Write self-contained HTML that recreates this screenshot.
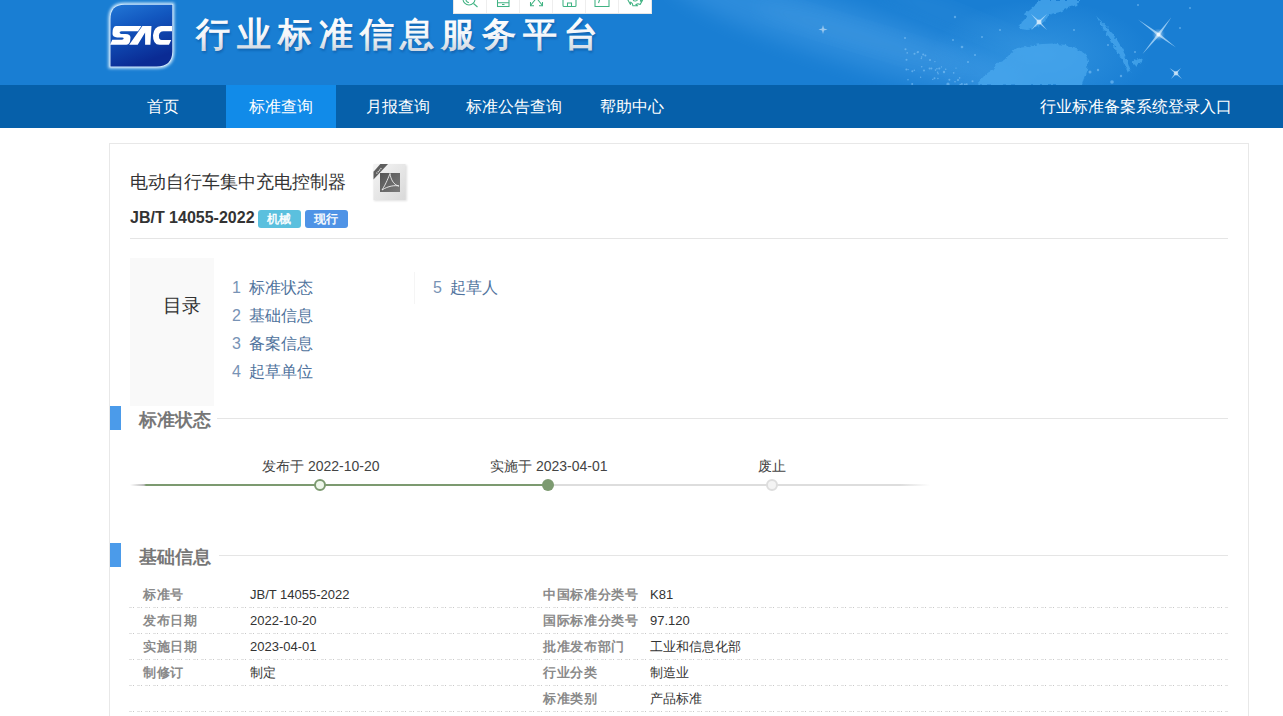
<!DOCTYPE html>
<html><head><meta charset="utf-8">
<style>
*{margin:0;padding:0;box-sizing:border-box}
html,body{width:1283px;height:716px;overflow:hidden;background:#fff;font-family:"Liberation Sans",sans-serif;color:#333}
.hdr{position:absolute;left:0;top:0;width:1283px;height:85px;background:#197ed3;overflow:hidden}
.nav{position:absolute;left:0;top:85px;width:1283px;height:43px;background:#0660aa}
.nav .it{position:absolute;top:0;height:43px;line-height:43px;color:#fff;font-size:16px;text-align:center}
.nav .act{background:#118be9}
.toolbar{position:absolute;left:453px;top:-1px;width:199px;height:15px;background:#fff;border:1px solid #e6e6e6;overflow:hidden}
.card{position:absolute;left:109px;top:143px;width:1140px;height:600px;border:1px solid #e8e8e8;background:#fff}
.abs{position:absolute;white-space:nowrap}
.title{font-size:18px;color:#333}
.code{font-size:16px;font-weight:bold;color:#333}
.tag{font-size:12px;font-weight:normal;-webkit-text-stroke:0.4px #fff;color:#fff;height:18px;line-height:18px;text-align:center;border-radius:3px}
.hr{position:absolute;height:1px;background:#e5e5e5}
.toc{position:absolute;left:130px;top:258px;width:84px;height:148px;background:#f9f9f9}
.tocit{font-size:16px;color:#50739d}
.tocit .n{color:#7893b5;margin-right:8px}
.sec{position:absolute;font-size:18px;font-weight:bold;color:#777}
.bar{position:absolute;left:110px;width:11px;height:24px;background:#4b9bea}
.lbl{font-size:13px;color:#8a8a8a;font-weight:bold;letter-spacing:0.7px}
.val{font-size:13px;color:#333}
.tl{font-size:14px;color:#444}
.dash{position:absolute;left:129px;width:1099px;height:1px;background:repeating-linear-gradient(to right,#e2e2e2 0,#e2e2e2 3px,#fff 3px,#fff 4px,#c8c8c8 4px,#c8c8c8 5px,#fff 5px,#fff 8px)}
</style></head><body>
<div class="hdr">
<svg width="1283" height="85" style="position:absolute;left:0;top:0">
<defs>
<linearGradient id="streak" x1="0" y1="0" x2="1" y2="0">
<stop offset="0" stop-color="#fff" stop-opacity="0"/>
<stop offset="0.55" stop-color="#fff" stop-opacity="0.12"/>
<stop offset="1" stop-color="#fff" stop-opacity="0"/>
</linearGradient>
<radialGradient id="glow" cx="0.5" cy="0.5" r="0.5">
<stop offset="0" stop-color="#5cb8f5" stop-opacity="0.35"/>
<stop offset="1" stop-color="#5cb8f5" stop-opacity="0"/>
</radialGradient>
<linearGradient id="logo" x1="0" y1="0" x2="0.35" y2="1">
<stop offset="0" stop-color="#2277d6"/>
<stop offset="0.4" stop-color="#1257bf"/>
<stop offset="1" stop-color="#0a2b94"/>
</linearGradient>
<linearGradient id="ttl" x1="0" y1="0" x2="0" y2="1">
<stop offset="0" stop-color="#ffffff"/>
<stop offset="0.55" stop-color="#f4f6f9"/>
<stop offset="1" stop-color="#c9d3de"/>
</linearGradient>
<filter id="blur2"><feGaussianBlur stdDeviation="2"/></filter>
<filter id="blur8" x="-50%" y="-50%" width="200%" height="200%"><feGaussianBlur stdDeviation="10"/></filter>
<filter id="blur3" x="-50%" y="-50%" width="200%" height="200%"><feGaussianBlur stdDeviation="3"/></filter>
<filter id="glowf" x="-50%" y="-50%" width="200%" height="200%"><feGaussianBlur stdDeviation="0.7"/></filter>
<filter id="blur15" x="-20%" y="-20%" width="140%" height="140%"><feGaussianBlur stdDeviation="1.5"/></filter>
<filter id="rough" x="-10%" y="-10%" width="120%" height="120%"><feTurbulence type="fractalNoise" baseFrequency="0.25" numOctaves="2" seed="4" result="n"/><feDisplacementMap in="SourceGraphic" in2="n" scale="5" xChannelSelector="R" yChannelSelector="G" result="d"/><feGaussianBlur in="d" stdDeviation="0.5"/></filter>
<filter id="blur05"><feGaussianBlur stdDeviation="0.5"/></filter>
<filter id="blur1"><feGaussianBlur stdDeviation="0.8"/></filter>
</defs>
<ellipse cx="850" cy="35" rx="190" ry="28" fill="#7cc4ff" opacity="0.2" transform="rotate(17 850 35)" filter="url(#blur8)"/>
<ellipse cx="860" cy="36" rx="110" ry="9" fill="#a8dcff" opacity="0.1" transform="rotate(17 860 36)" filter="url(#blur8)"/>
<ellipse cx="960" cy="20" rx="90" ry="8" fill="#a8dcff" opacity="0.08" transform="rotate(22 960 20)" filter="url(#blur8)"/>
<g fill="#fff" opacity="0.5" filter="url(#blur05)"><path d="M823,25 L824,28.5 L827.5,29.5 L824,30.5 L823,34 L822,30.5 L818.5,29.5 L822,28.5 Z"/></g>
<ellipse cx="1040" cy="55" rx="110" ry="55" fill="url(#glow)"/>
<g fill="#48a8ee" opacity="0.75" filter="url(#rough)">
<path d="M1019,28 L1022,22 L1026,18 L1024,14 L1030,9 L1036,4 L1040,0 L1080,0 L1076,5 L1068,8 L1060,12 L1052,14 L1046,18 L1042,24 L1036,27 L1028,29 Z"/>
<path d="M976,85 L984,76 L992,70 L996,64 L1004,60 L1010,54 L1017,48 L1026,47 L1034,45 L1042,44 L1053,43.5 L1066,45 L1078,48.5 L1085,54 L1088,61 L1087,70 L1084,78 L1082,85 Z"/>
<path d="M1096,16 Q1112,30 1122,48 Q1128,60 1131,72 L1128,73 Q1122,58 1114,46 Q1104,30 1096,16 Z"/>
<path d="M1132,62 L1138,58 L1142,60 L1136,66 Z"/>
</g>
<g fill="#c4e6ff" opacity="0.7" filter="url(#glowf)"><path d="M1171.4,17.3 L1157.5,33.8 L1142.3,54.2 L1159.5,35.4 Z"/><path d="M1138.0,19.5 L1157.7,35.6 L1176.0,47.5 L1159.3,33.6 Z"/><path d="M1169.5,68.0 L1175.4,73.9 L1182.0,79.0 L1176.6,72.5 Z"/><path d="M1181.0,68.0 L1175.3,72.6 L1171.0,79.0 L1176.7,73.8 Z"/><path d="M1031.0,14.0 L1038.3,22.7 L1047.0,30.0 L1039.7,21.3 Z"/><path d="M1047.0,14.0 L1038.3,21.3 L1031.0,30.0 L1039.7,22.7 Z"/></g>
<g fill="#fff">
<circle cx="1039" cy="22" r="2.5" opacity="0.55" filter="url(#glowf)"/>
<circle cx="1158.5" cy="34.6" r="4" opacity="0.45" filter="url(#blur15)"/>
<circle cx="1158.5" cy="34.6" r="1.8" opacity="0.8" filter="url(#blur05)"/>
<circle cx="1176" cy="73.2" r="2.2" opacity="0.5" filter="url(#glowf)"/>
</g>
<g fill="#9fd6ff" opacity="0.45"><circle cx="921.7" cy="66.8" r="0.8"/><circle cx="945.7" cy="69.2" r="0.8"/><circle cx="923.2" cy="54.4" r="1.0"/><circle cx="937.9" cy="78.5" r="0.8"/><circle cx="932.8" cy="79.4" r="0.7"/><circle cx="949.4" cy="79.7" r="1.0"/><circle cx="959.6" cy="77.9" r="0.8"/><circle cx="938.1" cy="73.8" r="0.8"/><circle cx="955.0" cy="81.8" r="0.8"/><circle cx="956.0" cy="68.1" r="0.7"/><circle cx="914.5" cy="53.7" r="1.0"/><circle cx="935.5" cy="70.1" r="0.8"/><circle cx="934.5" cy="78.3" r="1.0"/><circle cx="929.6" cy="68.4" r="1.0"/><circle cx="921.3" cy="58.5" r="0.7"/><circle cx="964.9" cy="84.6" r="1.0"/><circle cx="953.7" cy="72.9" r="0.8"/><circle cx="972.5" cy="81.2" r="1.0"/><circle cx="912.3" cy="71.2" r="1.0"/><circle cx="964.8" cy="84.6" r="0.7"/><circle cx="934.9" cy="61.6" r="0.7"/><circle cx="908.1" cy="69.6" r="0.7"/><circle cx="931.4" cy="68.5" r="1.0"/><circle cx="966.7" cy="84.2" r="1.0"/><circle cx="905.5" cy="49.3" r="1.0"/><circle cx="907.2" cy="52.9" r="0.8"/><circle cx="925.4" cy="55.5" r="1.0"/><circle cx="908.0" cy="79.7" r="0.8"/><circle cx="912.2" cy="83.9" r="1.0"/><circle cx="924.0" cy="70.4" r="1.0"/><circle cx="921.6" cy="57.0" r="0.8"/><circle cx="941.5" cy="66.9" r="0.7"/><circle cx="960.2" cy="84.5" r="0.8"/><circle cx="906.4" cy="69.6" r="1.0"/><circle cx="914.3" cy="70.3" r="0.8"/><circle cx="937.6" cy="72.2" r="0.8"/><circle cx="939.3" cy="68.6" r="1.0"/><circle cx="906.5" cy="59.8" r="1.0"/><circle cx="936.9" cy="68.7" r="0.8"/><circle cx="917.4" cy="52.4" r="0.8"/><circle cx="961.9" cy="83.9" r="1.0"/><circle cx="920.6" cy="77.2" r="0.7"/>
<circle cx="955" cy="17" r="1.2"/><circle cx="962" cy="47" r="1.3"/><circle cx="953" cy="40" r="1"/><circle cx="982" cy="37" r="1"/>
<circle cx="930" cy="60" r="1"/><circle cx="918" cy="52" r="1"/><circle cx="944" cy="72" r="1.2"/><circle cx="958" cy="80" r="1"/>
<circle cx="1090" cy="72" r="1.5"/><circle cx="1098" cy="70" r="1.2"/><circle cx="1112" cy="82" r="1.8"/><circle cx="1121" cy="76" r="1.2"/>
<circle cx="1000" cy="30" r="1"/><circle cx="1074" cy="30" r="1"/><circle cx="1108" cy="45" r="1"/><circle cx="1135" cy="52" r="1"/>
<circle cx="1180" cy="28" r="1"/><circle cx="1190" cy="8" r="1"/><circle cx="1138" cy="5" r="1"/><circle cx="905" cy="38" r="1"/>
<circle cx="968" cy="62" r="1"/><circle cx="975" cy="55" r="1"/><circle cx="948" cy="84" r="1.6"/>
</g>
<path d="M124.5,4.7 H172.3 V51 Q172.3,66.5 156.5,66.5 H110.5 V19 Q110.5,4.7 124.5,4.7 Z" fill="none" stroke="#e6f6ff" stroke-width="4" opacity="0.9" filter="url(#blur15)"/>
<path d="M124.5,4.7 H172.3 V51 Q172.3,66.5 156.5,66.5 H110.5 V19 Q110.5,4.7 124.5,4.7 Z" fill="none" stroke="#d6efff" stroke-width="1.6" opacity="0.85"/>
<path d="M124.5,4.7 H172.3 V51 Q172.3,66.5 156.5,66.5 H110.5 V19 Q110.5,4.7 124.5,4.7 Z" fill="url(#logo)"/>
<g fill="#fff">
<path d="M116,26 H141.4 L138,31.3 H121.4 Q119.4,31.5 119.6,32.8 Q119.9,33.9 121.2,33.9 H125.5 Q130.6,34.2 130.5,37.5 Q130.3,44.6 126.5,44.8 H110.1 L112.3,39.8 H122 Q123.6,39.6 123.7,38.6 Q123.6,37.4 122.2,37.4 H117.2 Q112.2,37.2 112.5,33.2 Q112.5,26.2 116,26 Z"/>
<path d="M142.4,26 H151.5 L150.4,44.8 H145.1 L145.1,32.6 L137.7,44.8 H129.2 Z"/>
<path d="M161,26 H172 V31.3 H163.5 Q159.2,31.5 158.9,35.4 Q158.9,40 161.8,40 H171.2 L169,44.8 H159.5 Q152.8,44.6 153,35.2 Q154,26.2 161,26 Z"/>
</g>
<text x="196" y="46" font-size="34" fill="#0c4f94" stroke="#0c4f94" stroke-width="1.1" opacity="0.55" filter="url(#blur1)" letter-spacing="6.9" transform="translate(1,2)">行业标准信息服务平台</text>
<text x="196" y="46" font-size="34" fill="url(#ttl)" stroke="url(#ttl)" stroke-width="1.1" letter-spacing="6.9">行业标准信息服务平台</text>
</svg>
</div>
<div class="nav">
  <div class="it" style="left:110px;width:106px">首页</div>
  <div class="it act" style="left:226px;width:110px">标准查询</div>
  <div class="it" style="left:346px;width:104px">月报查询</div>
  <div class="it" style="left:456px;width:116px">标准公告查询</div>
  <div class="it" style="left:580px;width:104px">帮助中心</div>
  <div class="it" style="left:1030px;width:212px">行业标准备案系统登录入口</div>
</div>
<div class="toolbar">
<svg width="199" height="15" style="position:absolute;left:-1px;top:0" fill="none" stroke="#41b383" stroke-width="1.05">
<line x1="33.5" y1="0" x2="33.5" y2="13" stroke="#eee" stroke-width="1"/>
<line x1="66.5" y1="0" x2="66.5" y2="13" stroke="#eee" stroke-width="1"/>
<line x1="99.5" y1="0" x2="99.5" y2="13" stroke="#eee" stroke-width="1"/>
<line x1="132.5" y1="0" x2="132.5" y2="13" stroke="#eee" stroke-width="1"/>
<line x1="165.5" y1="0" x2="165.5" y2="13" stroke="#eee" stroke-width="1"/>
<circle cx="16" cy="-1" r="6"/>
<path d="M13,-1 A3,3 0 0 0 16,2.5"/>
<path d="M20.5,3.5 L24.5,7"/>
<rect x="44.5" y="-9" width="11.5" height="15.5"/>
<path d="M44.5,2.7 H56 M49,4.5 H51.5"/>
<path d="M83.5,-2 L77.5,5.5 M83.5,-2 L89.5,5.5 M77.5,2 V5.8 H81 M89.5,2 V5.8 H86"/>
<path d="M110,-9 H122 L123,-8 V5.5 Q123,6.5 122,6.5 H111 Q110,6.5 110,5.5 Z"/>
<path d="M114.5,6.5 V3 H118.5 V6.5"/>
<path d="M142,-9 V6.5 H156 V-1"/>
<path d="M145.5,3 L147.5,-3"/>
<path d="M184.70,5.80 L179.90,5.80 L179.37,3.57 L177.71,2.01 L177.44,4.38 L175.04,0.22 L176.70,-1.35 L177.22,-3.57 L175.04,-2.62 L177.44,-6.78 L179.63,-6.12 L181.81,-6.78 L179.90,-8.20 L184.70,-8.20 L185.23,-5.97 L186.89,-4.41 L187.16,-6.78 L189.56,-2.62 L187.90,-1.05 L187.38,1.17 L189.56,0.22 L187.16,4.38 L184.97,3.72 L182.79,4.38 Z" stroke-linejoin="round"/><circle cx="182.3" cy="-1.2" r="2.3"/>
</svg>
</div>

<div class="card"></div>
<div class="abs title" style="left:130px;top:170px">电动自行车集中充电控制器</div>
<svg class="abs" style="left:370px;top:160px" width="42" height="44">
<defs>
<linearGradient id="pg" x1="0" y1="0" x2="1" y2="1"><stop offset="0" stop-color="#f4f4f4"/><stop offset="1" stop-color="#d9d9d9"/></linearGradient>
<linearGradient id="pd" x1="0" y1="0" x2="1" y2="1"><stop offset="0" stop-color="#555"/><stop offset="1" stop-color="#7a7a7a"/></linearGradient>
<filter id="ps"><feGaussianBlur stdDeviation="1"/></filter>
</defs>
<rect x="4" y="5" width="33" height="36" fill="#000" opacity="0.12" filter="url(#ps)"/>
<rect x="3.5" y="4" width="32" height="36" fill="url(#pg)"/>
<rect x="10" y="13" width="20" height="19" fill="url(#pd)"/>
<path d="M12,30 C16,24 19,16 20,13.5 C20.5,18 23,25 29,26 C25,25 18,26 12,30 Z" fill="none" stroke="#eee" stroke-width="0.9"/>
<path d="M3.5,11.8 L10.3,4 L18,4 L3.5,19.5 Z" fill="#5e5e5e"/><path d="M6.5,13.5 L11.5,8" stroke="#ddd" stroke-width="1.2" stroke-dasharray="1.2 0.8"/>
</svg>
<div class="abs code" style="left:130px;top:209px">JB/T 14055-2022</div>
<div class="abs tag" style="left:258px;top:210px;width:42.5px;background:#5bc0de">机械</div>
<div class="abs tag" style="left:305px;top:210px;width:42.5px;background:#4f93e6">现行</div>
<div class="hr" style="left:130px;top:238px;width:1098px"></div>

<div class="toc"></div>
<div class="abs" style="left:163px;top:293px;font-size:19px;color:#333">目录</div>
<div class="abs tocit" style="left:232px;top:278px"><span class="n">1</span>标准状态</div>
<div class="abs tocit" style="left:232px;top:306px"><span class="n">2</span>基础信息</div>
<div class="abs tocit" style="left:232px;top:334px"><span class="n">3</span>备案信息</div>
<div class="abs tocit" style="left:232px;top:362px"><span class="n">4</span>起草单位</div>
<div class="abs" style="left:414px;top:272px;width:1px;height:32px;background:#f5f5f5"></div>
<div class="abs tocit" style="left:433px;top:278px"><span class="n">5</span>起草人</div>

<div class="bar" style="top:406px"></div>
<div class="sec" style="left:139px;top:408px">标准状态</div>
<div class="hr" style="left:217px;top:418px;width:1011px"></div>

<div class="bar" style="top:543px"></div>
<div class="sec" style="left:139px;top:545px">基础信息</div>
<div class="hr" style="left:219px;top:555px;width:1009px"></div>


<div class="abs tl" style="left:262px;top:458px">发布于 2022-10-20</div>
<div class="abs tl" style="left:490px;top:458px">实施于 2023-04-01</div>
<div class="abs tl" style="left:758px;top:458px">废止</div>
<div class="abs" style="left:130px;top:484px;width:800px;height:2px;background:linear-gradient(to right,rgba(200,200,200,0) 0,#bbb 14px,#7c9a70 16px,#7c9a70 418px,#ddd 418px,#ddd 770px,rgba(221,221,221,0) 800px)"></div>
<div class="abs" style="left:314px;top:479px;width:12px;height:12px;border-radius:50%;border:2px solid #7c9a70;background:#eef7ea"></div>
<div class="abs" style="left:542px;top:479px;width:12px;height:12px;border-radius:50%;background:#7c9a70"></div>
<div class="abs" style="left:766px;top:479px;width:12px;height:12px;border-radius:50%;border:2px solid #ddd;background:#f4f4f4"></div>

<div class="abs lbl" style="left:143px;top:586px">标准号</div><div class="abs val" style="left:250px;top:587px">JB/T 14055-2022</div>
<div class="abs lbl" style="left:543px;top:586px">中国标准分类号</div><div class="abs val" style="left:650px;top:587px">K81</div>
<div class="dash" style="top:607px"></div>
<div class="abs lbl" style="left:143px;top:612px">发布日期</div><div class="abs val" style="left:250px;top:613px">2022-10-20</div>
<div class="abs lbl" style="left:543px;top:612px">国际标准分类号</div><div class="abs val" style="left:650px;top:613px">97.120</div>
<div class="dash" style="top:633px"></div>
<div class="abs lbl" style="left:143px;top:638px">实施日期</div><div class="abs val" style="left:250px;top:639px">2023-04-01</div>
<div class="abs lbl" style="left:543px;top:638px">批准发布部门</div><div class="abs val" style="left:650px;top:638px">工业和信息化部</div>
<div class="dash" style="top:659px"></div>
<div class="abs lbl" style="left:143px;top:664px">制修订</div><div class="abs val" style="left:250px;top:664px">制定</div>
<div class="abs lbl" style="left:543px;top:664px">行业分类</div><div class="abs val" style="left:650px;top:664px">制造业</div>
<div class="dash" style="top:685px"></div>
<div class="abs lbl" style="left:543px;top:690px">标准类别</div><div class="abs val" style="left:650px;top:690px">产品标准</div>
<div class="dash" style="top:711px"></div>
</body></html>
